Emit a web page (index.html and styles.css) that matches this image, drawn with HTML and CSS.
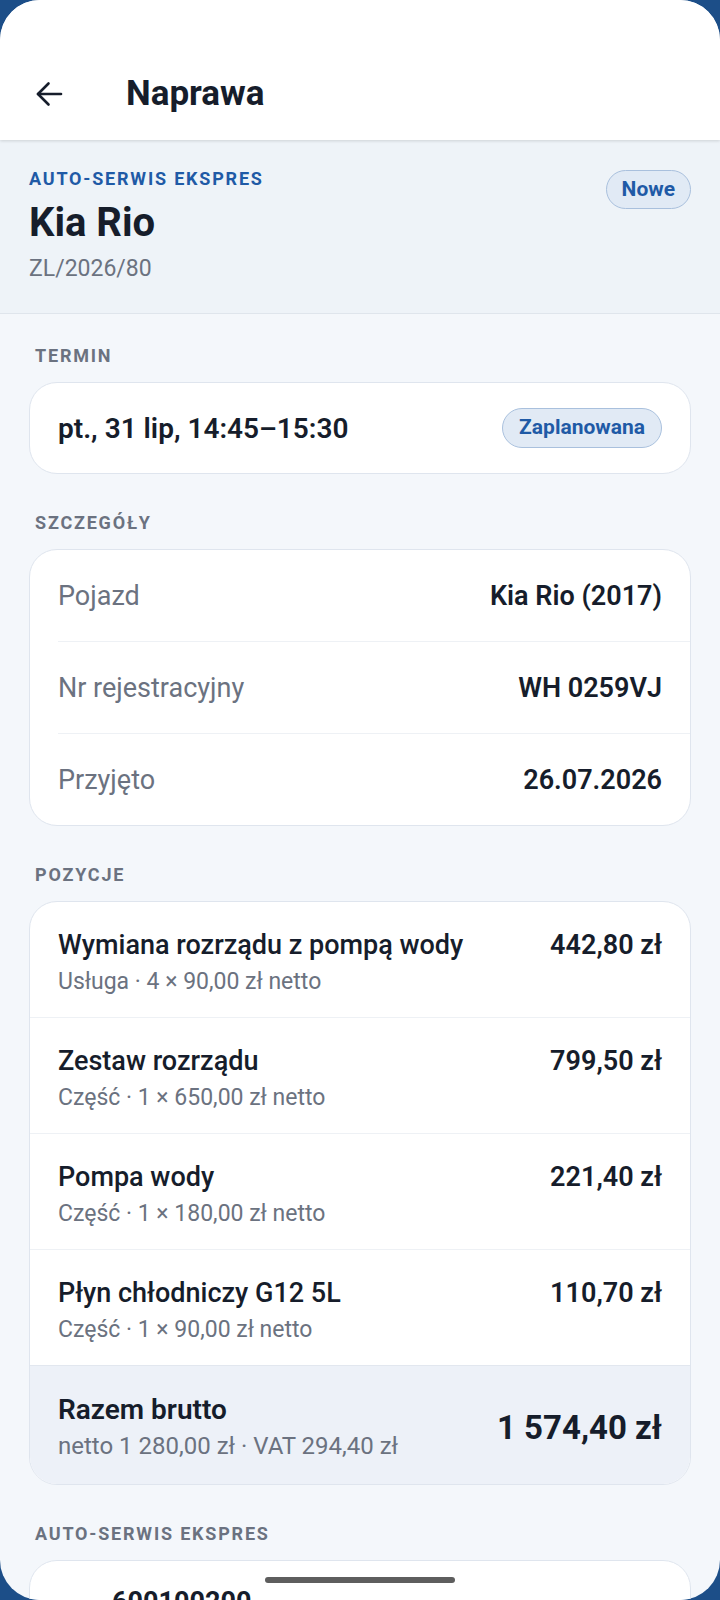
FILE: index.html
```html
<!DOCTYPE html>
<html lang="pl">
<head>
    <meta charset="UTF-8">
    <meta name="viewport" content="width=device-width, initial-scale=1.0">
    <title>Naprawa</title>
    <link rel="stylesheet" href="styles.css">
</head>
<body>
    <div class="screen">
        <header class="topbar">
            <svg class="back" width="28" height="28" viewBox="0 0 28 28" fill="none" stroke="#161d2b" stroke-width="2.6" stroke-linecap="round" stroke-linejoin="round">
                <path d="M26 14H3"/>
                <path d="M13.5 3.5L3 14l10.5 10.5"/>
            </svg>
            <h1>Naprawa</h1>
        </header>

        <section class="hero">
            <div>
                <div class="shop">AUTO-SERWIS EKSPRES</div>
                <div class="car">Kia Rio</div>
                <div class="number">ZL/2026/80</div>
            </div>
            <span class="badge badge-top">Nowe</span>
        </section>

        <main class="content">
            <div class="label first">TERMIN</div>
            <div class="card term">
                <span class="term-date">pt., 31 lip, 14:45–15:30</span>
                <span class="badge">Zaplanowana</span>
            </div>

            <div class="label">SZCZEGÓŁY</div>
            <div class="card">
                <div class="row">
                    <span class="row-key">Pojazd</span>
                    <span class="row-val">Kia Rio (2017)</span>
                </div>
                <div class="row">
                    <span class="row-key">Nr rejestracyjny</span>
                    <span class="row-val">WH 0259VJ</span>
                </div>
                <div class="row">
                    <span class="row-key">Przyjęto</span>
                    <span class="row-val">26.07.2026</span>
                </div>
            </div>

            <div class="label">POZYCJE</div>
            <div class="card items">
                <div class="item">
                    <div>
                        <div class="item-name">Wymiana rozrządu z pompą wody</div>
                        <div class="item-sub">Usługa · 4 × 90,00 zł netto</div>
                    </div>
                    <div class="item-price">442,80 zł</div>
                </div>
                <div class="item">
                    <div>
                        <div class="item-name">Zestaw rozrządu</div>
                        <div class="item-sub">Część · 1 × 650,00 zł netto</div>
                    </div>
                    <div class="item-price">799,50 zł</div>
                </div>
                <div class="item">
                    <div>
                        <div class="item-name">Pompa wody</div>
                        <div class="item-sub">Część · 1 × 180,00 zł netto</div>
                    </div>
                    <div class="item-price">221,40 zł</div>
                </div>
                <div class="item">
                    <div>
                        <div class="item-name">Płyn chłodniczy G12 5L</div>
                        <div class="item-sub">Część · 1 × 90,00 zł netto</div>
                    </div>
                    <div class="item-price">110,70 zł</div>
                </div>
                <div class="total">
                    <div>
                        <div class="total-name">Razem brutto</div>
                        <div class="item-sub">netto 1 280,00 zł · VAT 294,40 zł</div>
                    </div>
                    <div class="total-sum">1 574,40 zł</div>
                </div>
            </div>

            <div class="label">AUTO-SERWIS EKSPRES</div>
            <div class="card contact">
                <div class="phone">600100200</div>
            </div>
        </main>

        <div class="home-bar"></div>
    </div>
</body>
</html>
```

FILE: styles.css
```css
body {
    margin: 0;
    background: #1c4e88;
    font-family: Roboto, "Noto Sans", sans-serif;
    color: #161d2b;
}
.screen {
    position: relative;
    width: 720px;
    height: 1600px;
    border-radius: 40px;
    overflow: hidden;
    background: #f4f7fb;
}
.topbar {
    position: relative;
    z-index: 1;
    box-sizing: border-box;
    height: 140px;
    padding: 47px 35px 0;
    display: flex;
    align-items: center;
    gap: 63px;
    background: #ffffff;
    box-shadow: 0 1px 3px rgba(0, 0, 0, 0.14);
}
.topbar h1 {
    margin: 0;
    font-size: 35px;
    line-height: 40px;
    font-weight: 700;
}
.back {
    display: block;
    flex-shrink: 0;
}
.hero {
    display: flex;
    justify-content: space-between;
    align-items: flex-start;
    padding: 28px 29px 30px;
    background: #eef3f8;
    border-bottom: 1px solid #dfe5ec;
}
.shop {
    font-size: 18px;
    line-height: 22px;
    font-weight: 700;
    letter-spacing: 1.8px;
    color: #1f5aa6;
}
.car {
    margin-top: 11px;
    font-size: 40px;
    line-height: 44px;
    font-weight: 700;
}
.number {
    margin-top: 10px;
    font-size: 23px;
    line-height: 28px;
    color: #6b7280;
}
.badge {
    display: inline-block;
    box-sizing: border-box;
    height: 40px;
    padding: 0 16px;
    border: 1.5px solid #a9c0dd;
    border-radius: 20px;
    background: #e1eaf5;
    color: #1f5aa6;
    font-size: 21px;
    line-height: 37px;
    font-weight: 700;
}
.badge-top {
    margin-top: 2px;
    height: 39px;
    padding: 0 15px;
}
.content {
    padding: 0 29px;
}
.label {
    margin: 38px 6px 15px;
    font-size: 18px;
    line-height: 22px;
    font-weight: 700;
    letter-spacing: 1.8px;
    color: #6b7280;
}
.label.first {
    margin-top: 31px;
}
.card {
    background: #ffffff;
    border: 1.5px solid #dfe5ee;
    border-radius: 28px;
    overflow: hidden;
}
.term {
    box-sizing: border-box;
    height: 92px;
    padding: 0 28px;
    display: flex;
    justify-content: space-between;
    align-items: center;
}
.term-date {
    font-size: 28px;
    font-weight: 600;
}
.row {
    display: flex;
    justify-content: space-between;
    align-items: center;
    height: 91px;
    margin-left: 28px;
    padding-right: 28px;
}
.row + .row {
    border-top: 1.5px solid #eef1f5;
}
.row-key {
    font-size: 27px;
    color: #6b7280;
}
.row-val {
    font-size: 27px;
    font-weight: 600;
}
.item, .total {
    display: flex;
    justify-content: space-between;
    align-items: flex-start;
    padding: 27px 28px 21px;
}
.item + .item {
    border-top: 1.5px solid #eef1f5;
}
.item-name {
    font-size: 27px;
    line-height: 32px;
    font-weight: 500;
}
.item-sub {
    margin-top: 7px;
    font-size: 23px;
    line-height: 28px;
    color: #6b7280;
}
.item-price {
    font-size: 27px;
    line-height: 32px;
    font-weight: 600;
}
.total {
    align-items: center;
    padding: 28px 28px 24px;
    background: #edf1f8;
    border-top: 1.5px solid #e2e7ef;
}
.total .item-sub {
    margin-top: 6px;
    font-size: 24px;
}
.total-name {
    font-size: 28px;
    line-height: 32px;
    font-weight: 600;
}
.total-sum {
    font-size: 33px;
    font-weight: 700;
}
.contact {
    padding: 25px 28px 30px 82px;
}
.phone {
    font-size: 27px;
    line-height: 32px;
    font-weight: 700;
}
.home-bar {
    position: absolute;
    left: 265px;
    top: 1577px;
    width: 190px;
    height: 6px;
    border-radius: 3px;
    background: #5e5e5e;
}
```
